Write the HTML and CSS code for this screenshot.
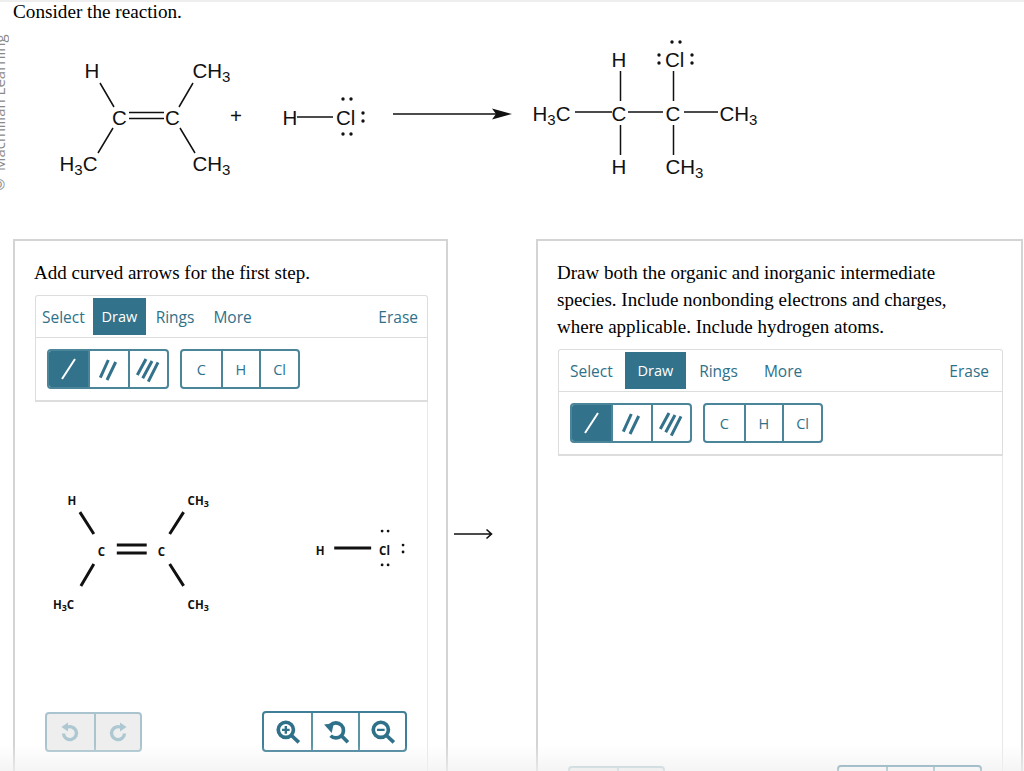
FILE: index.html
```html
<!DOCTYPE html>
<html lang="en">
<head>
<meta charset="utf-8">
<title>Consider the reaction</title>
<link rel="stylesheet" href="styles.css">
</head>
<body>
<div class="watermark">© Macmillan Learning</div>
<main class="page">
  <p class="question">Consider the reaction.</p>
  <svg class="reaction" viewBox="0 24 1024 215" aria-label="Reaction scheme">
    <g class="bonds">
      <path d="M100 83L114 107M193 83L179 107M113 128L98 153M180 128L195 153M129 112.500H164M129 118.500H164"/>
      <path d="M297 117H333"/>
      <path d="M393 114H496"/>
      <path d="M575 112H612M628 112H663M684 112H718M620.500 71V101M620.500 125V155M673.500 71V101M673.500 125V155"/>
    </g>
    <path class="head" d="M512 114L492 108.500L496 114L492 119.500Z"/>
    <text class="atom" x="84.500" y="78">H</text>
    <text class="atom" x="192.500" y="78">CH<tspan class="sub" dy="4">3</tspan></text>
    <text class="atom" x="112" y="125">C</text>
    <text class="atom" x="165" y="125">C</text>
    <text class="atom" x="59.500" y="171">H<tspan class="sub" dy="4">3</tspan><tspan dy="-4">C</tspan></text>
    <text class="atom" x="192.500" y="171">CH<tspan class="sub" dy="4">3</tspan></text>
    <text class="atom" x="230" y="123">+</text>
    <text class="atom" x="282.500" y="125">H</text>
    <text class="atom" x="336" y="125">Cl</text>
    <g class="dots">
      <circle cx="343" cy="99" r="1.700"/><circle cx="351" cy="99" r="1.700"/>
      <circle cx="343" cy="134" r="1.700"/><circle cx="351" cy="134" r="1.700"/>
      <circle cx="363" cy="113" r="1.700"/><circle cx="363" cy="121" r="1.700"/>
    </g>
    <text class="atom" x="532.500" y="121">H<tspan class="sub" dy="4">3</tspan><tspan dy="-4">C</tspan></text>
    <text class="atom" x="611.500" y="121">C</text>
    <text class="atom" x="665.500" y="121">C</text>
    <text class="atom" x="719.500" y="121">CH<tspan class="sub" dy="4">3</tspan></text>
    <text class="atom" x="611.500" y="67">H</text>
    <text class="atom" x="665" y="67">Cl</text>
    <text class="atom" x="611.500" y="174">H</text>
    <text class="atom" x="665.500" y="174">CH<tspan class="sub" dy="4">3</tspan></text>
    <g class="dots">
      <circle cx="672" cy="42" r="1.700"/><circle cx="680" cy="42" r="1.700"/>
      <circle cx="659" cy="55" r="1.700"/><circle cx="659" cy="63" r="1.700"/>
      <circle cx="692" cy="55" r="1.700"/><circle cx="692" cy="63" r="1.700"/>
    </g>
  </svg>

  <div class="panels">
    <section class="panel panel-left">
      <p class="prompt">Add curved arrows for the first step.</p>
      <div class="sketcher">
        <div class="tabs">
          <span class="tab tab-first">Select</span>
          <span class="tab tab-active">Draw</span>
          <span class="tab">Rings</span>
          <span class="tab">More</span>
          <span class="tab tab-erase">Erase</span>
        </div>
        <div class="tools">
          <div class="btn-group">
            <span class="btn btn-active"><svg class="bond-icon" viewBox="0 0 40 40"><path class="line-light" d="M13 30L26 10"/></svg></span>
            <span class="btn"><svg class="bond-icon" viewBox="0 0 40 40"><path class="line-teal" d="M11.300 28.700L19.300 11M18 31L26.700 13"/></svg></span>
            <span class="btn"><svg class="bond-icon" viewBox="0 0 40 40"><path class="line-teal" d="M9.300 26L18 10M14.700 29.300L24 12M20.300 32.700L30 13.300"/></svg></span>
          </div>
          <div class="btn-group">
            <span class="btn btn-text">C</span>
            <span class="btn btn-text">H</span>
            <span class="btn btn-text">Cl</span>
          </div>
        </div>
      </div>
      <div class="canvas">
        <svg class="molecule" viewBox="36 402 392 309" aria-label="Drawing canvas">
          <g class="sketch-bonds">
            <path d="M80 512L94 534M184 512L170 534M94 564L81 586M170 564L184 586M117 545H147M117 553H147M335 548H372"/>
          </g>
          <text class="sketch-atom" x="67.500" y="505">H</text>
          <text class="sketch-atom" x="188" y="505">CH<tspan class="sketch-sub" dy="2">3</tspan></text>
          <text class="sketch-atom" x="98" y="556">C</text>
          <text class="sketch-atom" x="158" y="556">C</text>
          <text class="sketch-atom" x="53" y="609">H<tspan class="sketch-sub" dy="2">3</tspan><tspan dy="-2">C</tspan></text>
          <text class="sketch-atom" x="188" y="609">CH<tspan class="sketch-sub" dy="2">3</tspan></text>
          <text class="sketch-atom" x="316.500" y="555">H</text>
          <text class="sketch-atom" x="380" y="555">Cl</text>
          <g class="dots">
            <circle cx="383" cy="531" r="1.400"/><circle cx="389" cy="531" r="1.400"/>
            <circle cx="383" cy="565" r="1.400"/><circle cx="389" cy="565" r="1.400"/>
            <circle cx="404" cy="545" r="1.400"/><circle cx="404" cy="552" r="1.400"/>
          </g>
        </svg>
        <div class="controls">
          <div class="ctl-group ctl-disabled">
            <span class="ctl"><svg class="ctl-icon" viewBox="0 0 24 24"><path class="arc" d="M8 8A6.500 6.500 0 1 1 5.500 13.500"/><path class="fill" d="M10 2.500V11.500L3.500 7Z"/></svg></span>
            <span class="ctl"><svg class="ctl-icon" viewBox="0 0 24 24"><path class="arc" d="M16 8A6.500 6.500 0 1 0 18.500 13.500"/><path class="fill" d="M14 2.500V11.500L20.500 7Z"/></svg></span>
          </div>
          <div class="ctl-group">
            <span class="ctl"><svg class="ctl-icon ctl-icon-lg" viewBox="0 0 24 24"><circle class="arc" cx="10" cy="10" r="7"/><path class="arc" d="M15 15L22 21.500"/><path class="inner" d="M6.500 10H13.500M10 6.500V13.500"/></svg></span>
            <span class="ctl"><svg class="ctl-icon ctl-icon-lg" viewBox="0 0 24 24"><path class="arc" d="M7 5.500A7 7 0 1 1 7 15.500"/><path class="arc" d="M17 15.500L23 21.500"/><path class="fill" d="M1 5L10 4L8 13Z"/></svg></span>
            <span class="ctl"><svg class="ctl-icon ctl-icon-lg" viewBox="0 0 24 24"><circle class="arc" cx="10" cy="10" r="7"/><path class="arc" d="M15 15L22 21.500"/><path class="inner" d="M6.500 10H13.500"/></svg></span>
          </div>
        </div>
      </div>
    </section>

    <div class="step-arrow">
      <svg class="step-arrow-icon" viewBox="0 0 40 14"><path d="M1 7H38M33.500 2.500L38.500 7L33.500 11.500"/></svg>
    </div>

    <section class="panel panel-right">
      <p class="prompt">Draw both the organic and inorganic intermediate species. Include nonbonding electrons and charges, where applicable. Include hydrogen atoms.</p>
      <div class="sketcher">
        <div class="tabs">
          <span class="tab tab-first">Select</span>
          <span class="tab tab-active">Draw</span>
          <span class="tab">Rings</span>
          <span class="tab">More</span>
          <span class="tab tab-erase">Erase</span>
        </div>
        <div class="tools">
          <div class="btn-group">
            <span class="btn btn-active"><svg class="bond-icon" viewBox="0 0 40 40"><path class="line-light" d="M13 30L26 10"/></svg></span>
            <span class="btn"><svg class="bond-icon" viewBox="0 0 40 40"><path class="line-teal" d="M11.300 28.700L19.300 11M18 31L26.700 13"/></svg></span>
            <span class="btn"><svg class="bond-icon" viewBox="0 0 40 40"><path class="line-teal" d="M9.300 26L18 10M14.700 29.300L24 12M20.300 32.700L30 13.300"/></svg></span>
          </div>
          <div class="btn-group">
            <span class="btn btn-text">C</span>
            <span class="btn btn-text">H</span>
            <span class="btn btn-text">Cl</span>
          </div>
        </div>
      </div>
      <div class="canvas">
        <div class="blank"></div>
        <div class="controls">
          <div class="ctl-group ctl-disabled"><span class="ctl"></span><span class="ctl"></span></div>
          <div class="ctl-group"><span class="ctl"></span><span class="ctl"></span><span class="ctl"></span></div>
        </div>
      </div>
    </section>
  </div>
</main>
<div class="fade"></div>
</body>
</html>
```
FILE: styles.css
```css
* { box-sizing: border-box; }
html, body { margin: 0; height: 771px; overflow: hidden; background: #fff; }
body { position: relative; color: #000; font-family: "Liberation Serif", serif; }

.page { border-top: 2px solid #eee; height: 771px; overflow: hidden; }

.watermark {
  position: absolute;
  left: -9px;
  top: 35px;
  height: 160px;
  writing-mode: vertical-rl;
  transform: rotate(180deg);
  font: 15px/16px "Open Sans", sans-serif;
  color: #8a8a8a;
  white-space: nowrap;
}

.question {
  margin: 0 0 0 13px;
  height: 22px;
  font-size: 19.200px;
  line-height: 20px;
}

.reaction { display: block; width: 1024px; height: 215px; }
.bonds path { fill: none; stroke: #111; stroke-width: 1.500; }
.head { fill: #111; }
.dots circle { fill: #111; }
.atom { font: 20.500px "Liberation Sans", sans-serif; fill: #111; }
.sub { font-size: 15px; }

.panels { display: flex; align-items: flex-start; padding-left: 13px; }
.panel {
  flex: none;
  height: 560px;
  border: 2px solid #d4d4d4;
  padding: 18px 18px 0 20px;
}
.panel-left { width: 435px; }
.panel-right { width: 487px; }
.prompt { margin: 0 0 9px -1px; font-size: 19px; line-height: 27px; }
.panel-right .prompt { max-width: 430px; }

.step-arrow { flex: none; width: 88px; padding: 288px 0 0 5px; }
.step-arrow-icon { display: block; width: 40px; height: 14px; fill: none; stroke: #111; stroke-width: 1.600; }

.sketcher {
  border: 1px solid #ddd;
  border-bottom-width: 2px;
  border-radius: 3px 3px 0 0;
  font-family: "Open Sans", sans-serif;
  color: #2f7189;
}
.panel-left .sketcher { --tab-pad: 9.500px; --active-pad: 8.800px; --first-pad: 6px; --first-right: 8px; --erase-right: 9px; }
.panel-right .sketcher { --tab-pad: 13px; --active-pad: 12.800px; --first-pad: 11px; --first-right: 12px; --erase-right: 13px; }

.tabs {
  display: flex;
  height: 42px;
  padding: 2px 0;
  border-bottom: 1px solid #ddd;
  font-size: 15.500px;
}
.tab { display: flex; align-items: center; padding: 0 var(--tab-pad); }
.tab-first { padding-left: var(--first-pad); padding-right: var(--first-right); }
.tab-active { padding: 0 var(--active-pad); background: #32728b; color: #fff; font-size: 14.500px; font-weight: 500; }
.tab-erase { margin-left: auto; padding-right: var(--erase-right); }

.tools { display: flex; gap: 11px; padding: 11px; }
.btn-group { display: flex; height: 40px; border: 2px solid #4a8599; border-radius: 4px; overflow: hidden; }
.btn { display: flex; align-items: center; justify-content: center; width: 39.300px; border-left: 2px solid #4a8599; }
.btn:first-child { border-left: 0; }
.btn-active { background: #32728b; }
.btn-text { width: 38.700px; font-size: 14.500px; }
.bond-icon { display: block; width: 40px; height: 40px; flex: none; fill: none; }
.line-light { stroke: #fff; stroke-width: 2; }
.line-teal { stroke: #32728b; stroke-width: 3; }

.canvas { height: 500px; border-right: 1px solid #e8e8e8; padding-left: 1px; }
.molecule { display: block; width: 100%; height: 309px; }
.blank { height: 309px; }
.sketch-bonds path { fill: none; stroke: #111; stroke-width: 3; }
.sketch-atom { font: 700 11.500px "Open Sans", sans-serif; fill: #111; }
.sketch-sub { font-size: 9px; }

.controls { display: flex; justify-content: space-between; align-items: flex-start; padding: 0 20px 0 9px; }
.ctl-group { display: flex; height: 41px; border: 2px solid #3f7f97; border-radius: 4px; overflow: hidden; background: #fff; }
.ctl { display: flex; align-items: center; justify-content: center; width: 47px; border-left: 2px solid #5b93a7; }
.ctl:first-child { border-left: 0; }
.ctl-disabled { margin-top: 1px; height: 40px; border-color: #a9c4ce; background: #eee; }
.ctl-disabled .ctl { width: 46.500px; border-color: #a9c4ce; }
.ctl-icon { display: block; width: 24px; height: 24px; flex: none; fill: none; }
.ctl-icon-lg { width: 26px; height: 26px; }
.arc { fill: none; stroke: #2f7189; stroke-width: 3.400; }
.inner { fill: none; stroke: #2f7189; stroke-width: 2.200; }
.fill { fill: #2f7189; }
.ctl-disabled .arc { stroke: #aec8d1; }
.ctl-disabled .fill { fill: #aec8d1; }

.fade {
  position: absolute;
  left: 0;
  right: 0;
  bottom: 0;
  height: 26px;
  background: linear-gradient(to bottom, rgba(240, 240, 240, 0), rgba(240, 240, 240, 0.700));
  pointer-events: none;
}
```
